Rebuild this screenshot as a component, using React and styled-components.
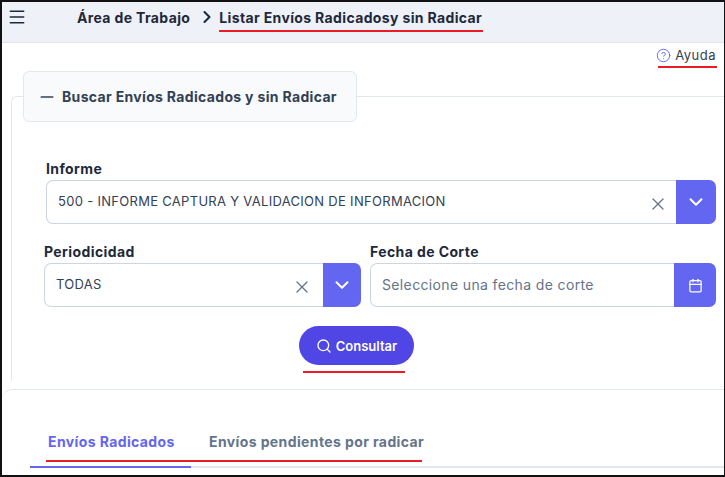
import React from 'react';
import styled, { createGlobalStyle } from 'styled-components';
import { Menu, ChevronRight, CircleHelp, X, ChevronDown, Calendar, Search, Minus } from 'lucide-react';

const Global = createGlobalStyle`
  html, body { margin: 0; padding: 0; background: #fff; }
  * { box-sizing: border-box; }
  body { font-family: Inter, "Liberation Sans", sans-serif; }
`;

const Frame = styled.div`
  width: 725px;
  height: 477px;
  border: 2px solid #111;
  border-right-width: 1px;
  border-bottom-width: 2px;
  overflow: hidden;
  position: relative;
  background: #fff;
`;

const TopBar = styled.header`
  height: 41px;
  display: flex;
  align-items: center;
  padding: 0 0 10px 5px;
  background: #eef1f8;
  border-bottom: 1px solid #dfe5f0;
  color: #1e293b;
`;

const Crumbs = styled.nav`
  display: flex;
  align-items: center;
  margin-left: 50px;
  font-size: 14px;
  font-weight: 700;
  letter-spacing: 0.36px;
`;

const Current = styled.span`
  position: relative;
  margin-left: 2px;
  &::after {
    content: '';
    position: absolute;
    left: 0;
    right: -1px;
    bottom: -6px;
    height: 2px;
    background: #ed1c24;
  }
`;

const HelpRow = styled.div`
  display: flex;
  justify-content: flex-end;
  padding: 2px 8px 0 0;
  height: 30px;
`;

const Help = styled.div`
  position: relative;
  display: flex;
  align-items: center;
  gap: 4px;
  font-size: 13px;
  letter-spacing: 0.5px;
  color: #334155;
  height: 20px;
  &::after {
    content: '';
    position: absolute;
    left: 2px;
    right: -1px;
    bottom: -3px;
    height: 2px;
    background: #ed1c24;
  }
`;

const Fieldset = styled.section`
  margin: 23px 0 0 9px;
  border-top: 1px solid #e2e8f0;
  border-left: 1px solid #e2e8f0;
  border-top-left-radius: 6px;
  height: 285px;
  padding-left: 34px;
  position: relative;
`;

const Legend = styled.div`
  position: absolute;
  left: 11px;
  top: -26px;
  width: 334px;
  height: 51px;
  display: flex;
  align-items: center;
  gap: 5px;
  padding-left: 13px;
  background: #f8fafc;
  border: 1px solid #e2e8f0;
  border-radius: 6px;
  font-size: 14px;
  font-weight: 700;
  letter-spacing: 0.33px;
  color: #334155;
`;

const Form = styled.div`
  display: flex;
  flex-direction: column;
  padding-top: 63px;
  width: 672px;
`;

const Label = styled.label`
  display: block;
  font-size: 14px;
  font-weight: 700;
  letter-spacing: 0.4px;
  color: #1e293b;
  line-height: 18px;
  margin-bottom: 2px;
`;

const Row = styled.div`
  display: flex;
  gap: 9px;
  margin-top: 19px;
  margin-left: -2px;
`;

const Field = styled.div`
  width: ${p => p.$width}px;
`;

const Control = styled.div`
  height: 44px;
  display: flex;
  align-items: center;
  border: 1px solid #cbd5e6;
  border-right: 0;
  border-radius: 7px;
  background: #fff;
`;

const Value = styled.span`
  flex: 1;
  padding: 0 0 2px 11px;
  font-size: ${p => (p.$placeholder ? 14 : 13)}px;
  letter-spacing: ${p => (p.$placeholder ? 0.36 : 0.3)}px;
  color: ${p => (p.$placeholder ? '#64748b' : '#334155')};
`;

const Clear = styled.span`
  display: flex;
  margin-right: ${p => p.$gap}px;
  margin-top: 3px;
  color: #64748b;
`;

const AddOn = styled.span`
  width: ${p => p.$width}px;
  height: 44px;
  margin-top: -1px;
  margin-bottom: -1px;
  display: flex;
  align-items: center;
  justify-content: center;
  background: #6366f1;
  color: #fff;
  border-radius: 0 7px 7px 0;
`;

const Actions = styled.div`
  display: flex;
  justify-content: center;
  padding: 19px 49px 0 0;
  margin-left: -2px;
`;

const Submit = styled.button`
  position: relative;
  height: 39px;
  width: 115px;
  display: flex;
  align-items: center;
  justify-content: center;
  gap: 4px;
  border: 0;
  padding: 0;
  border-radius: 20px;
  background: #4f46e5;
  color: #fff;
  font: 600 13px Inter, sans-serif;
  &::after {
    content: '';
    position: absolute;
    left: 4px;
    right: 9px;
    bottom: -8px;
    height: 2px;
    background: #ed1c24;
  }
`;

const Lower = styled.section`
  margin-top: 8px;
  padding: 41px 0 0 28px;
  border-top: 1px solid #e2e8f0;
  border-top-left-radius: 10px;
`;

const Tabs = styled.div`
  display: flex;
  position: relative;
  height: 37px;
  border-bottom: 2px solid #e2e8f0;
  &::after {
    content: '';
    position: absolute;
    left: 16px;
    width: 376px;
    bottom: 4px;
    height: 2px;
    background: #ed1c24;
  }
`;

const Tab = styled.div`
  width: ${p => p.$width}px;
  padding-left: ${p => p.$pad}px;
  margin-bottom: -2px;
  height: 37px;
  line-height: 20px;
  padding-top: 1px;
  font-size: 14px;
  font-weight: 700;
  letter-spacing: 0.39px;
  color: ${p => (p.$active ? '#6366f1' : '#64748b')};
  border-bottom: 2px solid ${p => (p.$active ? '#6366f1' : 'transparent')};
`;

export default function App() {
  return (
    <>
      <Global />
      <Frame>
        <TopBar>
          <Menu size={20} strokeWidth={1.8} />
          <Crumbs>
            Área de Trabajo
            <ChevronRight size={20} strokeWidth={2.5} style={{ marginLeft: 7 }} />
            <Current>Listar Envíos Radicadosy sin Radicar</Current>
          </Crumbs>
        </TopBar>
        <HelpRow>
          <Help>
            <CircleHelp size={15} strokeWidth={1.5} color="#6366f1" />
            Ayuda
          </Help>
        </HelpRow>
        <Fieldset>
          <Legend>
            <Minus size={20} strokeWidth={1.6} />
            Buscar Envíos Radicados y sin Radicar
          </Legend>
          <Form>
            <Field $width={670}>
              <Label>Informe</Label>
              <Control>
                <Value>500 - INFORME CAPTURA Y VALIDACION DE INFORMACION</Value>
                <Clear $gap={8}><X size={20} strokeWidth={1.5} /></Clear>
                <AddOn $width={40}><ChevronDown size={22} strokeWidth={2.2} /></AddOn>
              </Control>
            </Field>
            <Row>
              <Field $width={317}>
                <Label>Periodicidad</Label>
                <Control>
                  <Value>TODAS</Value>
                  <Clear $gap={11}><X size={20} strokeWidth={1.5} /></Clear>
                  <AddOn $width={38}><ChevronDown size={22} strokeWidth={2.2} /></AddOn>
                </Control>
              </Field>
              <Field $width={346}>
                <Label>Fecha de Corte</Label>
                <Control>
                  <Value $placeholder>Seleccione una fecha de corte</Value>
                  <AddOn $width={42}><Calendar size={15} strokeWidth={2} /></AddOn>
                </Control>
              </Field>
            </Row>
            <Actions>
              <Submit><Search size={16} />Consultar</Submit>
            </Actions>
          </Form>
        </Fieldset>
        <Lower>
          <Tabs>
            <Tab $active $width={161} $pad={18}>Envíos Radicados</Tab>
            <Tab $width={260} $pad={18}>Envíos pendientes por radicar</Tab>
          </Tabs>
        </Lower>
      </Frame>
    </>
  );
}
